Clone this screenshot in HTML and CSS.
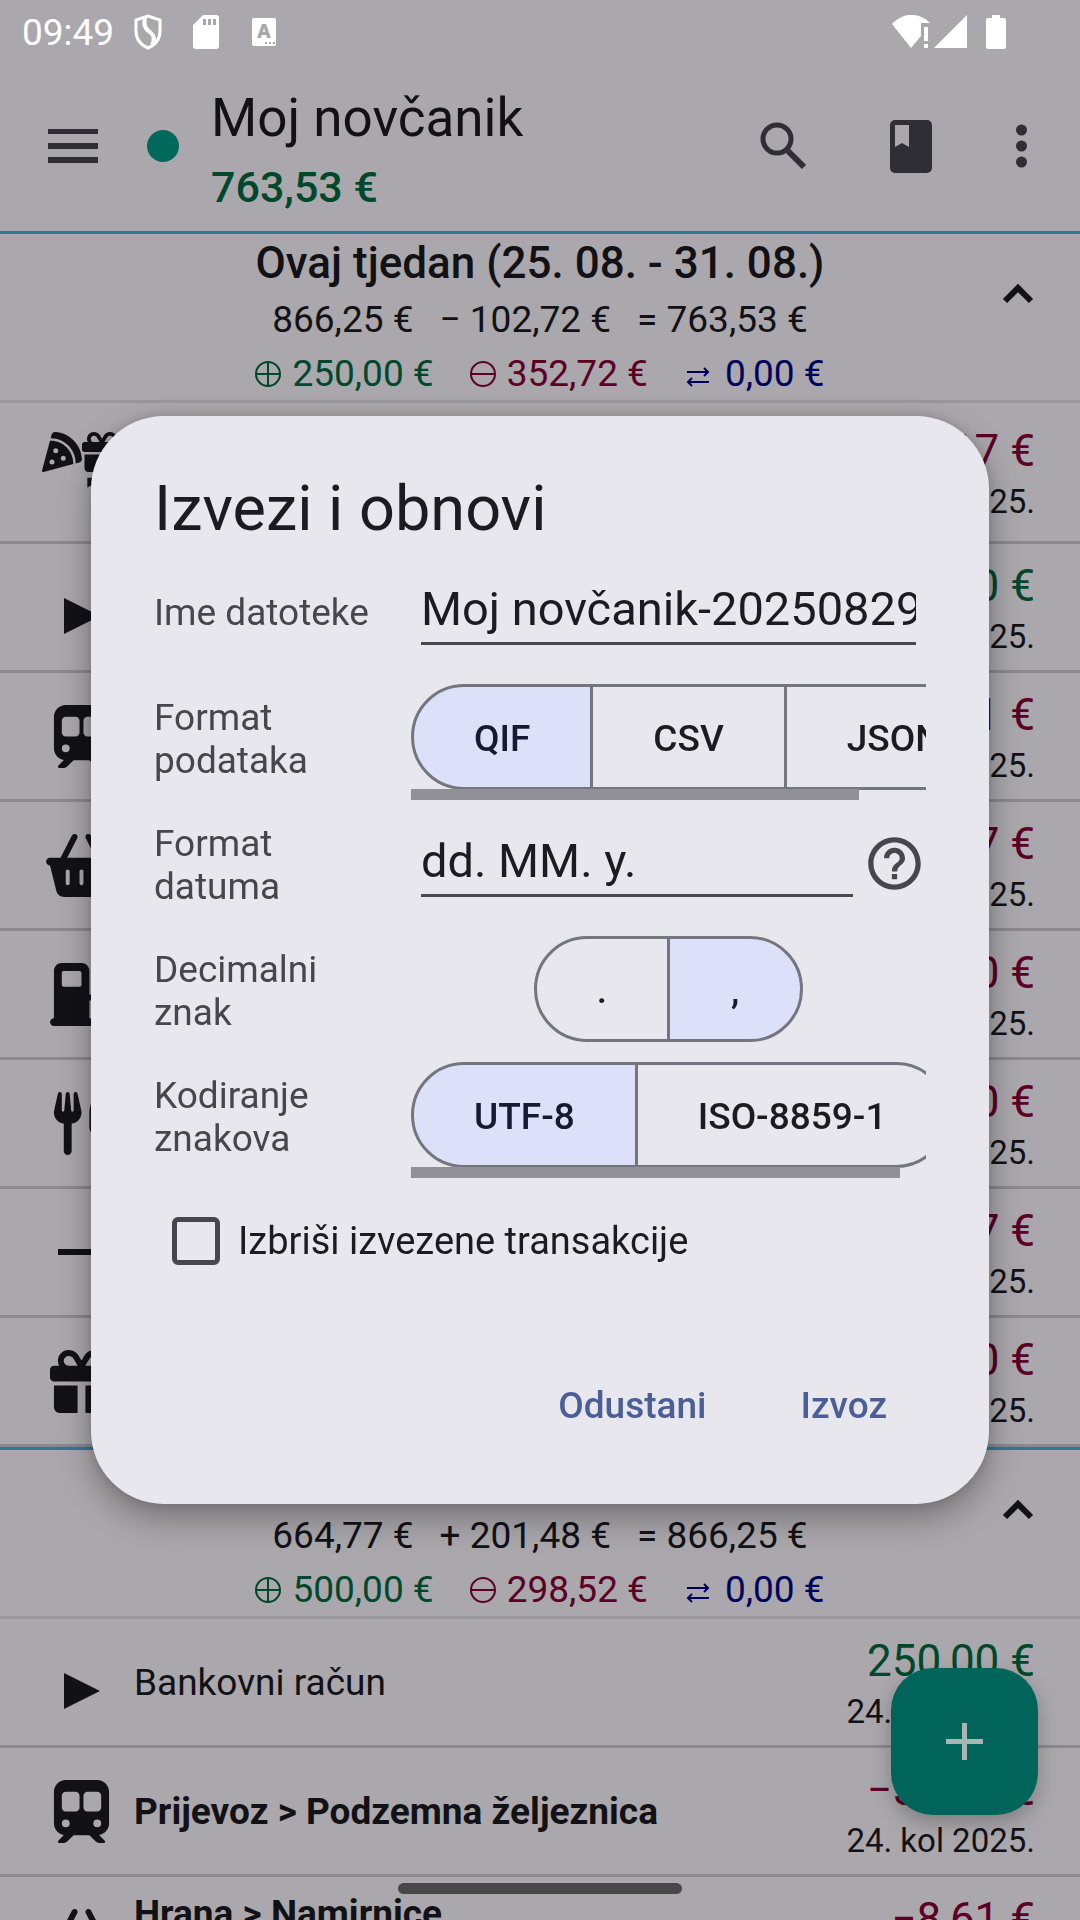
FILE: index.html
```html
<!DOCTYPE html>
<html lang="hr">
<head>
<meta charset="utf-8">
<meta name="viewport" content="width=device-width, initial-scale=1">
<title>Moj novčanik</title>
<link rel="stylesheet" href="styles.css">
</head>
<body>
<svg class="sprite" aria-hidden="true">
  <symbol id="pizza" viewBox="0 0 512 512"><path d="M169.7 .9c-22.8-1.6-41.9 14-47.5 34.7L110.4 80c.5 0 1.1 0 1.6 0c176.7 0 320 143.3 320 320c0 .5 0 1.1 0 1.6l44.4-11.8c20.8-5.5 36.3-24.7 34.7-47.5C498.5 159.5 352.5 13.5 169.7 .9zM399.8 410.2c.1-3.4 .2-6.8 .2-10.2c0-159.1-128.9-288-288-288c-3.4 0-6.8 .1-10.2 .2L.5 491.9c-1.5 5.5 .1 11.4 4.1 15.4s9.9 5.6 15.4 4.1L399.8 410.2zM176 208a32 32 0 1 1 0 64 32 32 0 1 1 0-64zm64 128a32 32 0 1 1 64 0 32 32 0 1 1 -64 0zM96 384a32 32 0 1 1 64 0 32 32 0 1 1 -64 0z"/></symbol>
  <symbol id="gift" viewBox="0 0 512 512"><path d="M190.5 68.8L225.3 128H224 152c-22.1 0-40-17.9-40-40s17.9-40 40-40h2.2c14.9 0 28.8 7.9 36.3 20.8zM64 88c0 14.4 3.5 28 9.6 40H32c-17.7 0-32 14.3-32 32v64c0 17.7 14.3 32 32 32H480c17.7 0 32-14.3 32-32V160c0-17.7-14.3-32-32-32H438.4c6.1-12 9.6-25.6 9.6-40c0-48.6-39.4-88-88-88h-2.2c-31.9 0-61.5 16.9-77.7 44.4L256 85.5l-24.1-41C215.7 16.9 186.1 0 154.2 0H152C103.4 0 64 39.4 64 88zm336 0c0 22.1-17.9 40-40 40H288h-1.3l34.8-59.2C329.1 55.9 342.9 48 357.8 48H360c22.1 0 40 17.9 40 40zM32 288V464c0 26.5 21.5 48 48 48H224V288H32zM288 512H432c26.5 0 48-21.5 48-48V288H288V512z"/></symbol>
  <symbol id="train" viewBox="0 0 448 512"><path d="M96 0C43 0 0 43 0 96V352c0 48 35.2 87.7 81.1 94.9l-46 46C28.1 499.9 33.1 512 43 512H82.7c8.5 0 16.6-3.4 22.6-9.4L160 448H288l54.6 54.6c6 6 14.1 9.4 22.6 9.4H405c10 0 15-12.1 7.9-19.1l-46-46c46-7.1 81.1-46.9 81.1-94.9V96c0-53-43-96-96-96H96zM64 128c0-17.7 14.3-32 32-32h80c17.7 0 32 14.3 32 32v96c0 17.7-14.3 32-32 32H96c-17.7 0-32-14.3-32-32V128zM272 96h80c17.7 0 32 14.3 32 32v96c0 17.7-14.3 32-32 32H272c-17.7 0-32-14.3-32-32V128c0-17.7 14.3-32 32-32zM64 352a32 32 0 1 1 64 0 32 32 0 1 1 -64 0zm288-32a32 32 0 1 1 0 64 32 32 0 1 1 0-64z"/></symbol>
  <symbol id="basket" viewBox="0 0 576 512"><path d="M253.3 35.1c6.1-11.8 1.5-26.3-10.2-32.4s-26.3-1.5-32.4 10.2L117.6 192H32c-17.7 0-32 14.3-32 32s14.3 32 32 32L83.9 463.5C91 492 116.6 512 146 512H430c29.4 0 55-20 62.1-48.5L544 256c17.7 0 32-14.3 32-32s-14.3-32-32-32H458.4L365.3 12.9C359.2 1.2 344.7-3.4 332.9 2.7s-16.3 20.6-10.2 32.4L404.3 192H171.7L253.3 35.1zM192 304v96c0 8.8-7.2 16-16 16s-16-7.2-16-16V304c0-8.8 7.2-16 16-16s16 7.2 16 16zm96-16c8.8 0 16 7.2 16 16v96c0 8.8-7.2 16-16 16s-16-7.2-16-16V304c0-8.8 7.2-16 16-16zm128 16v96c0 8.8-7.2 16-16 16s-16-7.2-16-16V304c0-8.8 7.2-16 16-16s16 7.2 16 16z"/></symbol>
  <symbol id="fuel" viewBox="0 0 512 512"><path d="M32 64C32 28.7 60.7 0 96 0H256c35.3 0 64 28.7 64 64V256h8c48.6 0 88 39.4 88 88v32c0 13.3 10.7 24 24 24s24-10.7 24-24V222c-27.6-7.1-48-32.2-48-62V96L384 64c-8.8-8.8-8.8-23.2 0-32s23.2-8.8 32 0l77.3 77.3c12 12 18.7 28.3 18.7 45.3V376c0 39.8-32.2 72-72 72s-72-32.2-72-72V344c0-22.1-17.9-40-40-40h-8V448c17.7 0 32 14.3 32 32s-14.3 32-32 32H32c-17.7 0-32-14.3-32-32s14.3-32 32-32V64zM96 80v96c0 8.8 7.2 16 16 16H240c8.8 0 16-7.2 16-16V80c0-8.8-7.2-16-16-16H112c-8.8 0-16 7.2-16 16z"/></symbol>
  <symbol id="utensils" viewBox="0 0 448 512"><path d="M416 0C400 0 288 32 288 176V288c0 35.3 28.7 64 64 64h32V480c0 17.7 14.3 32 32 32s32-14.3 32-32V352 240 32c0-17.7-14.3-32-32-32zM64 16C64 7.8 57.9 1 49.7 .1S34.2 4.6 32.4 12.5L2.1 148.8C.7 155.1 0 161.5 0 167.9c0 45.9 35.1 83.6 80 87.7V480c0 17.7 14.3 32 32 32s32-14.3 32-32V255.6c44.9-4.1 80-41.8 80-87.7c0-6.4-.7-12.8-2.1-19.1L191.6 12.5c-1.8-8-9.3-13.3-17.4-12.4S160 7.8 160 16V150.2c0 5.4-4.4 9.8-9.8 9.8c-5.1 0-9.3-3.9-9.8-9L127.9 14.6C127.2 6.3 120.3 0 112 0s-15.2 6.3-15.9 14.6L83.7 151c-.5 5.1-4.7 9-9.8 9c-5.4 0-9.8-4.4-9.8-9.8V16z"/></symbol>
  <symbol id="play" viewBox="0 0 36 63"><path d="M0 22l36 18L0 58z"/></symbol>
  <symbol id="minus" viewBox="0 0 48 63"><path d="M0 28h48v6H0z"/></symbol>
  <symbol id="flag" viewBox="0 0 41 41"><path d="M26 6h15v2L26 16z"/></symbol>
  <symbol id="chevron" viewBox="0 0 32 20"><path d="M3 18L16 5l13 13" fill="none" stroke="currentColor" stroke-width="6"/></symbol>
  <symbol id="in" viewBox="0 0 26 26"><path d="M13 1a12 12 0 1 0 0 24 12 12 0 1 0 0-24zM13 1v24M1 13h24" fill="none" stroke="currentColor" stroke-width="2"/></symbol>
  <symbol id="out" viewBox="0 0 26 26"><path d="M13 1a12 12 0 1 0 0 24 12 12 0 1 0 0-24zM1 13h24" fill="none" stroke="currentColor" stroke-width="2"/></symbol>
  <symbol id="swap" viewBox="0 0 24 26"><path d="M1 11h21M18 7l4 4-4 4M23 21H2M6 17l-4 4 4 4" fill="none" stroke="currentColor" stroke-width="2"/></symbol>
</svg>

<div class="status">
  <span class="clock">09:49</span>
  <svg class="status-shield" viewBox="0 0 30 36"><path d="M15 2L3 6v11c0 8 5 14 12 17 7-3 12-9 12-17V6z" fill="none" stroke="#fff" stroke-width="3"/><path d="M12 4c-2 7 0 11 5 14 5 4 5 8 2 13" fill="none" stroke="#fff" stroke-width="4"/></svg>
  <svg class="status-sd" viewBox="0 0 26 34"><path fill="#fff" fill-rule="evenodd" d="M10 0h13a3 3 0 0 1 3 3v28a3 3 0 0 1-3 3H3a3 3 0 0 1-3-3V10zM10 4v6h3V4zm5 0v6h3V4zm5 0v6h3V4z"/></svg>
  <svg class="status-lang" viewBox="0 0 24 28"><path fill="#fff" fill-rule="evenodd" d="M2 0h20a2 2 0 0 1 2 2v24a2 2 0 0 1-2 2H2a2 2 0 0 1-2-2V2a2 2 0 0 1 2-2zM10 6L5 20h4l1-3h4l1 3h4L14 6zm1 8l1-4 1 4zM13 24v2h2v-2zm4 0v2h2v-2zm4 0v2h2v-2z"/></svg>
  <span class="spacer"></span>
  <svg class="status-net" viewBox="0 0 76 34"><path fill="#fff" d="M0 9C11-3 27-3 38 8h-9v13l-10 12zM32 12h4v14h-4zM32 29h4v4h-4zM42 33L75 0v33z"/></svg>
  <svg class="status-battery" viewBox="0 0 20 34"><path fill="#fff" d="M6 0h8v3h4a2 2 0 0 1 2 2v27a2 2 0 0 1-2 2H2a2 2 0 0 1-2-2V5a2 2 0 0 1 2-2h4z"/></svg>
</div>

<header class="appbar">
  <button class="icon-btn" aria-label="Izbornik"><svg class="i-menu" viewBox="0 0 50 34"><path d="M0 0h50v5H0zM0 14h50v6H0zM0 28h50v6H0z"/></svg></button>
  <span class="account-dot"></span>
  <div class="account">
    <h1>Moj novčanik</h1>
    <p class="balance">763,53 €</p>
  </div>
  <button class="icon-btn" aria-label="Traži"><svg class="i-search" viewBox="0 0 46 48"><path d="M17 3a14 14 0 1 0 0 28 14 14 0 1 0 0-28z" fill="none" stroke="currentColor" stroke-width="5"/><path d="M28 29l16 16" stroke="currentColor" stroke-width="6"/></svg></button>
  <button class="icon-btn" aria-label="Knjiga"><svg class="i-book" viewBox="0 0 42 53"><path fill-rule="evenodd" d="M5 0h32a5 5 0 0 1 5 5v43a5 5 0 0 1-5 5H5a5 5 0 0 1-5-5V5a5 5 0 0 1 5-5zM5 5v22l7-4 7 4V5z"/></svg></button>
  <button class="icon-btn" aria-label="Više"><svg class="i-more" viewBox="0 0 11 44"><circle cx="5.500" cy="6" r="5.500"/><circle cx="5.500" cy="22" r="5.500"/><circle cx="5.500" cy="38" r="5.500"/></svg></button>
</header>

<main>
  <section>
    <div class="week">
      <h2>Ovaj tjedan (25. 08. - 31. 08.)</h2>
      <p class="sums"><span>866,25 €</span><span>− 102,72 €</span><span>= 763,53 €</span></p>
      <p class="flows"><span class="plus"><svg><use href="#in"/></svg>250,00 €</span><span class="neg"><svg><use href="#out"/></svg>352,72 €</span><span class="move"><svg><use href="#swap"/></svg>0,00 €</span></p>
      <button class="fold" aria-label="Sažmi"><svg><use href="#chevron"/></svg></button>
    </div>
    <ul class="entries">
      <li class="split"><span class="icons"><svg><use href="#pizza"/></svg><svg><use href="#gift"/></svg><svg><use href="#flag"/></svg></span><span class="sum"><b class="neg">−3,17 €</b><time>29. kol 2025.</time></span></li>
      <li><svg class="icon play"><use href="#play"/></svg><span class="sum"><b class="plus">250,00 €</b><time>28. kol 2025.</time></span></li>
      <li><svg class="icon"><use href="#train"/></svg><span class="sum"><b class="neg">−4,91 €</b><time>28. kol 2025.</time></span></li>
      <li><svg class="icon"><use href="#basket"/></svg><span class="sum"><b class="neg">−58,37 €</b><time>27. kol 2025.</time></span></li>
      <li><svg class="icon"><use href="#fuel"/></svg><span class="sum"><b class="neg">−60,00 €</b><time>27. kol 2025.</time></span></li>
      <li><svg class="icon"><use href="#utensils"/></svg><span class="sum"><b class="neg">−24,50 €</b><time>26. kol 2025.</time></span></li>
      <li><svg class="icon minus"><use href="#minus"/></svg><span class="sum"><b class="neg">−94,67 €</b><time>26. kol 2025.</time></span></li>
      <li><svg class="icon"><use href="#gift"/></svg><span class="sum"><b class="neg">−80,00 €</b><time>25. kol 2025.</time></span></li>
    </ul>
  </section>
  <section>
    <div class="week">
      <h2>Prošli tjedan (18. 08. - 24. 08.)</h2>
      <p class="sums"><span>664,77 €</span><span>+ 201,48 €</span><span>= 866,25 €</span></p>
      <p class="flows"><span class="plus"><svg><use href="#in"/></svg>500,00 €</span><span class="neg"><svg><use href="#out"/></svg>298,52 €</span><span class="move"><svg><use href="#swap"/></svg>0,00 €</span></p>
      <button class="fold" aria-label="Sažmi"><svg><use href="#chevron"/></svg></button>
    </div>
    <ul class="entries">
      <li><svg class="icon play"><use href="#play"/></svg><span class="what plain">Bankovni račun</span><span class="sum"><b class="plus">250,00 €</b><time>24. kol 2025.</time></span></li>
      <li><svg class="icon"><use href="#train"/></svg><span class="what">Prijevoz &gt; Podzemna željeznica</span><span class="sum"><b class="neg">−50,00 €</b><time>24. kol 2025.</time></span></li>
      <li><svg class="icon"><use href="#basket"/></svg><span class="what">Hrana &gt; Namirnice<br>Trgovina</span><span class="sum"><b class="neg">−8,61 €</b><time>24. kol 2025.</time></span></li>
    </ul>
  </section>
</main>

<button class="fab" aria-label="Nova transakcija"><svg viewBox="0 0 37 37"><path d="M16 0h5v16h16v5H21v16h-5V21H0v-5h16z"/></svg></button>
<div class="home-bar"></div>

<div class="overlay">
  <form class="dialog" role="dialog" aria-labelledby="dlg-title">
    <h2 id="dlg-title">Izvezi i obnovi</h2>
    <div class="field">
      <label for="filename">Ime datoteke</label>
      <div class="control"><input class="text" id="filename" type="text" value="Moj novčanik-20250829-094914"></div>
    </div>
    <div class="field">
      <span class="label" id="l-format">Format podataka</span>
      <div class="control toggle-box">
        <div class="toggle" role="radiogroup" aria-labelledby="l-format">
          <label><input type="radio" name="format" checked><span>QIF</span></label>
          <label><input type="radio" name="format"><span>CSV</span></label>
          <label><input type="radio" name="format"><span>JSON</span></label>
        </div>
        <div class="thumb" style="width:87%"></div>
      </div>
    </div>
    <div class="field">
      <label for="datefmt">Format datuma</label>
      <div class="control"><input class="text" id="datefmt" type="text" value="dd. MM. y."><button type="button" class="help" aria-label="Pomoć"><svg viewBox="0 0 24 24"><path d="M11 18h2v-2h-2v2zm1-16C6.480 2 2 6.480 2 12s4.480 10 10 10 10-4.480 10-10S17.520 2 12 2zm0 18c-4.410 0-8-3.590-8-8s3.590-8 8-8 8 3.590 8 8-3.590 8-8 8zm0-14c-2.210 0-4 1.790-4 4h2c0-1.100.9-2 2-2s2 .9 2 2c0 2-3 1.750-3 5h2c0-2.250 3-2.500 3-5 0-2.210-1.790-4-4-4z"/></svg></button></div>
    </div>
    <div class="field">
      <span class="label" id="l-dec">Decimalni znak</span>
      <div class="control toggle-box centered">
        <div class="toggle" role="radiogroup" aria-labelledby="l-dec">
          <label><input type="radio" name="dec"><span>.</span></label>
          <label><input type="radio" name="dec" checked><span>,</span></label>
        </div>
      </div>
    </div>
    <div class="field">
      <span class="label" id="l-enc">Kodiranje znakova</span>
      <div class="control toggle-box">
        <div class="toggle" role="radiogroup" aria-labelledby="l-enc">
          <label><input type="radio" name="enc" checked><span>UTF-8</span></label>
          <label><input type="radio" name="enc"><span>ISO-8859-1</span></label>
        </div>
        <div class="thumb" style="width:95%"></div>
      </div>
    </div>
    <label class="check"><input type="checkbox"><span>Izbriši izvezene transakcije</span></label>
    <div class="actions">
      <button type="button">Odustani</button>
      <button type="button">Izvoz</button>
    </div>
  </form>
</div>
</body>
</html>
```

FILE: styles.css
```css
* { box-sizing: border-box; }

body {
  margin: 0;
  height: 100vh;
  overflow: hidden;
  background: #aaa8ac;
  color: #121116;
  font-family: Roboto, "Noto Sans", sans-serif;
  font-size: 37px;
}

h1, h2, p, ul { margin: 0; padding: 0; }
button { margin: 0; padding: 0; border: 0; background: none; color: inherit; font: inherit; }
svg { display: block; fill: currentColor; }
.sprite { position: absolute; width: 0; height: 0; }
.spacer { flex: 1; }

.plus { color: #00482b; }
.neg { color: #5c0024; }
.move { color: #00005c; }

/* status bar */
.status {
  display: flex;
  align-items: center;
  height: 63px;
  padding: 0 74px 0 22px;
  color: #fff;
}
.clock { width: 111px; padding-top: 2px; }
.status-shield { width: 30px; height: 36px; margin-right: 30px; }
.status-sd { width: 26px; height: 34px; margin-right: 33px; }
.status-lang { width: 24px; height: 28px; }
.status-net { width: 76px; height: 34px; margin-right: 18px; }
.status-battery { width: 20px; height: 34px; }

/* app bar */
.appbar {
  display: flex;
  align-items: center;
  height: 168px;
  padding: 0 12px 2px 26px;
}
.icon-btn {
  display: flex;
  align-items: center;
  justify-content: center;
  width: 94px;
  height: 94px;
  color: #2f2e35;
}
.icon-btn + .icon-btn { margin-left: 34px; }
.icon-btn:last-child { margin-left: 16px; }
.i-menu { width: 50px; height: 34px; }
.i-search { width: 46px; height: 48px; }
.i-book { width: 42px; height: 53px; }
.i-more { width: 11px; height: 44px; }
.account-dot { width: 32px; height: 32px; margin: 0 32px 0 27px; border-radius: 50%; background: #00695c; }
.account { flex: 1; padding-top: 12px; }
.account h1 { font-size: 53px; font-weight: 400; line-height: 70px; }
.balance { color: #00482b; font-size: 43px; font-weight: 500; line-height: 68px; }

/* week header */
.week {
  position: relative;
  border-top: 3px solid #2f7896;
  border-bottom: 3px solid #99979b;
  text-align: center;
}
.week h2 { font-size: 44px; font-weight: 500; line-height: 58px; }
.sums, .flows { display: flex; justify-content: center; }
.sums { gap: 26px; line-height: 56px; }
.flows { gap: 36px; line-height: 52px; }
.flows span { display: flex; align-items: center; gap: 11px; }
.flows svg { width: 26px; height: 26px; }
.flows .move svg { width: 24px; margin: 0 4px 0 2px; }
.fold { position: absolute; top: 43px; right: 46px; }
.fold svg { width: 32px; height: 32px; }

/* transactions */
.entries { list-style: none; }
.entries li {
  display: grid;
  grid-template-columns: 105px 1fr auto;
  align-items: center;
  height: 129px;
  padding: 0 45px 0 29px;
  border-bottom: 3px solid #8b898e;
}
.entries li.split { height: 141px; }
.icon { justify-self: center; width: 71px; height: 63px; }
.icon.play { width: 36px; }
.icon.minus { width: 48px; }
.icons { display: flex; flex-wrap: wrap; justify-content: center; padding: 0 12px; }
.icons svg { width: 40px; height: 40px; }
.what { padding-top: 2px; font-weight: 700; line-height: 54px; }
.what.plain { font-weight: 400; }
.sum { display: grid; grid-column: 3; justify-items: end; padding-top: 6px; }
.sum b { font-size: 44px; font-weight: 400; line-height: 54px; }
.sum time { font-size: 33px; line-height: 48px; }

.fab {
  position: fixed;
  right: 42px;
  bottom: 105px;
  display: flex;
  align-items: center;
  justify-content: center;
  width: 147px;
  height: 147px;
  border-radius: 42px;
  background: #00645b;
  color: #aab5b3;
  box-shadow: 0 8px 20px rgba(0, 0, 0, .25);
}
.fab svg { width: 37px; height: 37px; }
.home-bar {
  position: fixed;
  left: 50%;
  bottom: 26px;
  width: 284px;
  height: 11px;
  margin-left: -142px;
  border-radius: 6px;
  background: #48474a;
}

/* export dialog */
.overlay {
  position: fixed;
  inset: 0;
  display: flex;
  align-items: center;
  padding: 0 91px;
}
.dialog {
  flex: 1;
  min-width: 0;
  padding: 54px 63px 47px;
  border-radius: 73px;
  background: #e8e7ed;
  color: #1b1b21;
  box-shadow: 0 14px 34px rgba(0, 0, 0, .32), 0 0 12px rgba(0, 0, 0, .14);
}
.dialog h2 { font-size: 63px; font-weight: 400; line-height: 78px; }
.field { display: grid; grid-template-columns: 257px minmax(0, 1fr); align-items: center; height: 126px; }
.field > label, .field > .label { padding: 3px 32px 0 0; color: #46464c; line-height: 43px; }
.control { display: flex; align-items: center; min-width: 0; }
.text {
  flex: 1;
  min-width: 0;
  height: 68px;
  margin: 0 10px;
  padding: 0 0 3px;
  border: 0;
  border-bottom: 3px solid #48484e;
  border-radius: 0;
  outline: 0;
  background: none;
  color: #1b1b21;
  font: 400 47px/62px Roboto, "Noto Sans", sans-serif;
}
.help { width: 63px; height: 63px; color: #46464c; }
.help svg { width: 63px; height: 63px; }

.toggle-box { position: relative; overflow: hidden; height: 126px; }
.toggle { display: flex; flex: none; }
.centered { justify-content: center; }
.toggle label {
  display: flex;
  align-items: center;
  justify-content: center;
  min-width: 136px;
  height: 106px;
  padding: 2px 60px 0;
  border: 3px solid #74757e;
  font-weight: 500;
}
.toggle label + label { margin-left: -3px; }
.toggle label:first-child { border-radius: 53px 0 0 53px; }
.toggle label:last-child { border-radius: 0 53px 53px 0; }
.toggle label:has(input:checked) { background: #dce1f9; color: #141a2f; }
.toggle input { position: absolute; opacity: 0; pointer-events: none; }
.thumb { position: absolute; left: 0; bottom: 0; height: 11px; background: #919099; }

.check { display: flex; align-items: center; gap: 18px; height: 126px; padding-left: 18px; font-size: 38px; }
.check input {
  appearance: none;
  width: 48px;
  height: 48px;
  margin: 0;
  border: 5px solid #46464c;
  border-radius: 6px;
}
.actions { display: flex; justify-content: flex-end; gap: 32px; margin-top: 48px; padding-right: 8px; }
.actions button { height: 105px; padding: 2px 31px 0; color: #4a5f97; font-weight: 500; }
```
